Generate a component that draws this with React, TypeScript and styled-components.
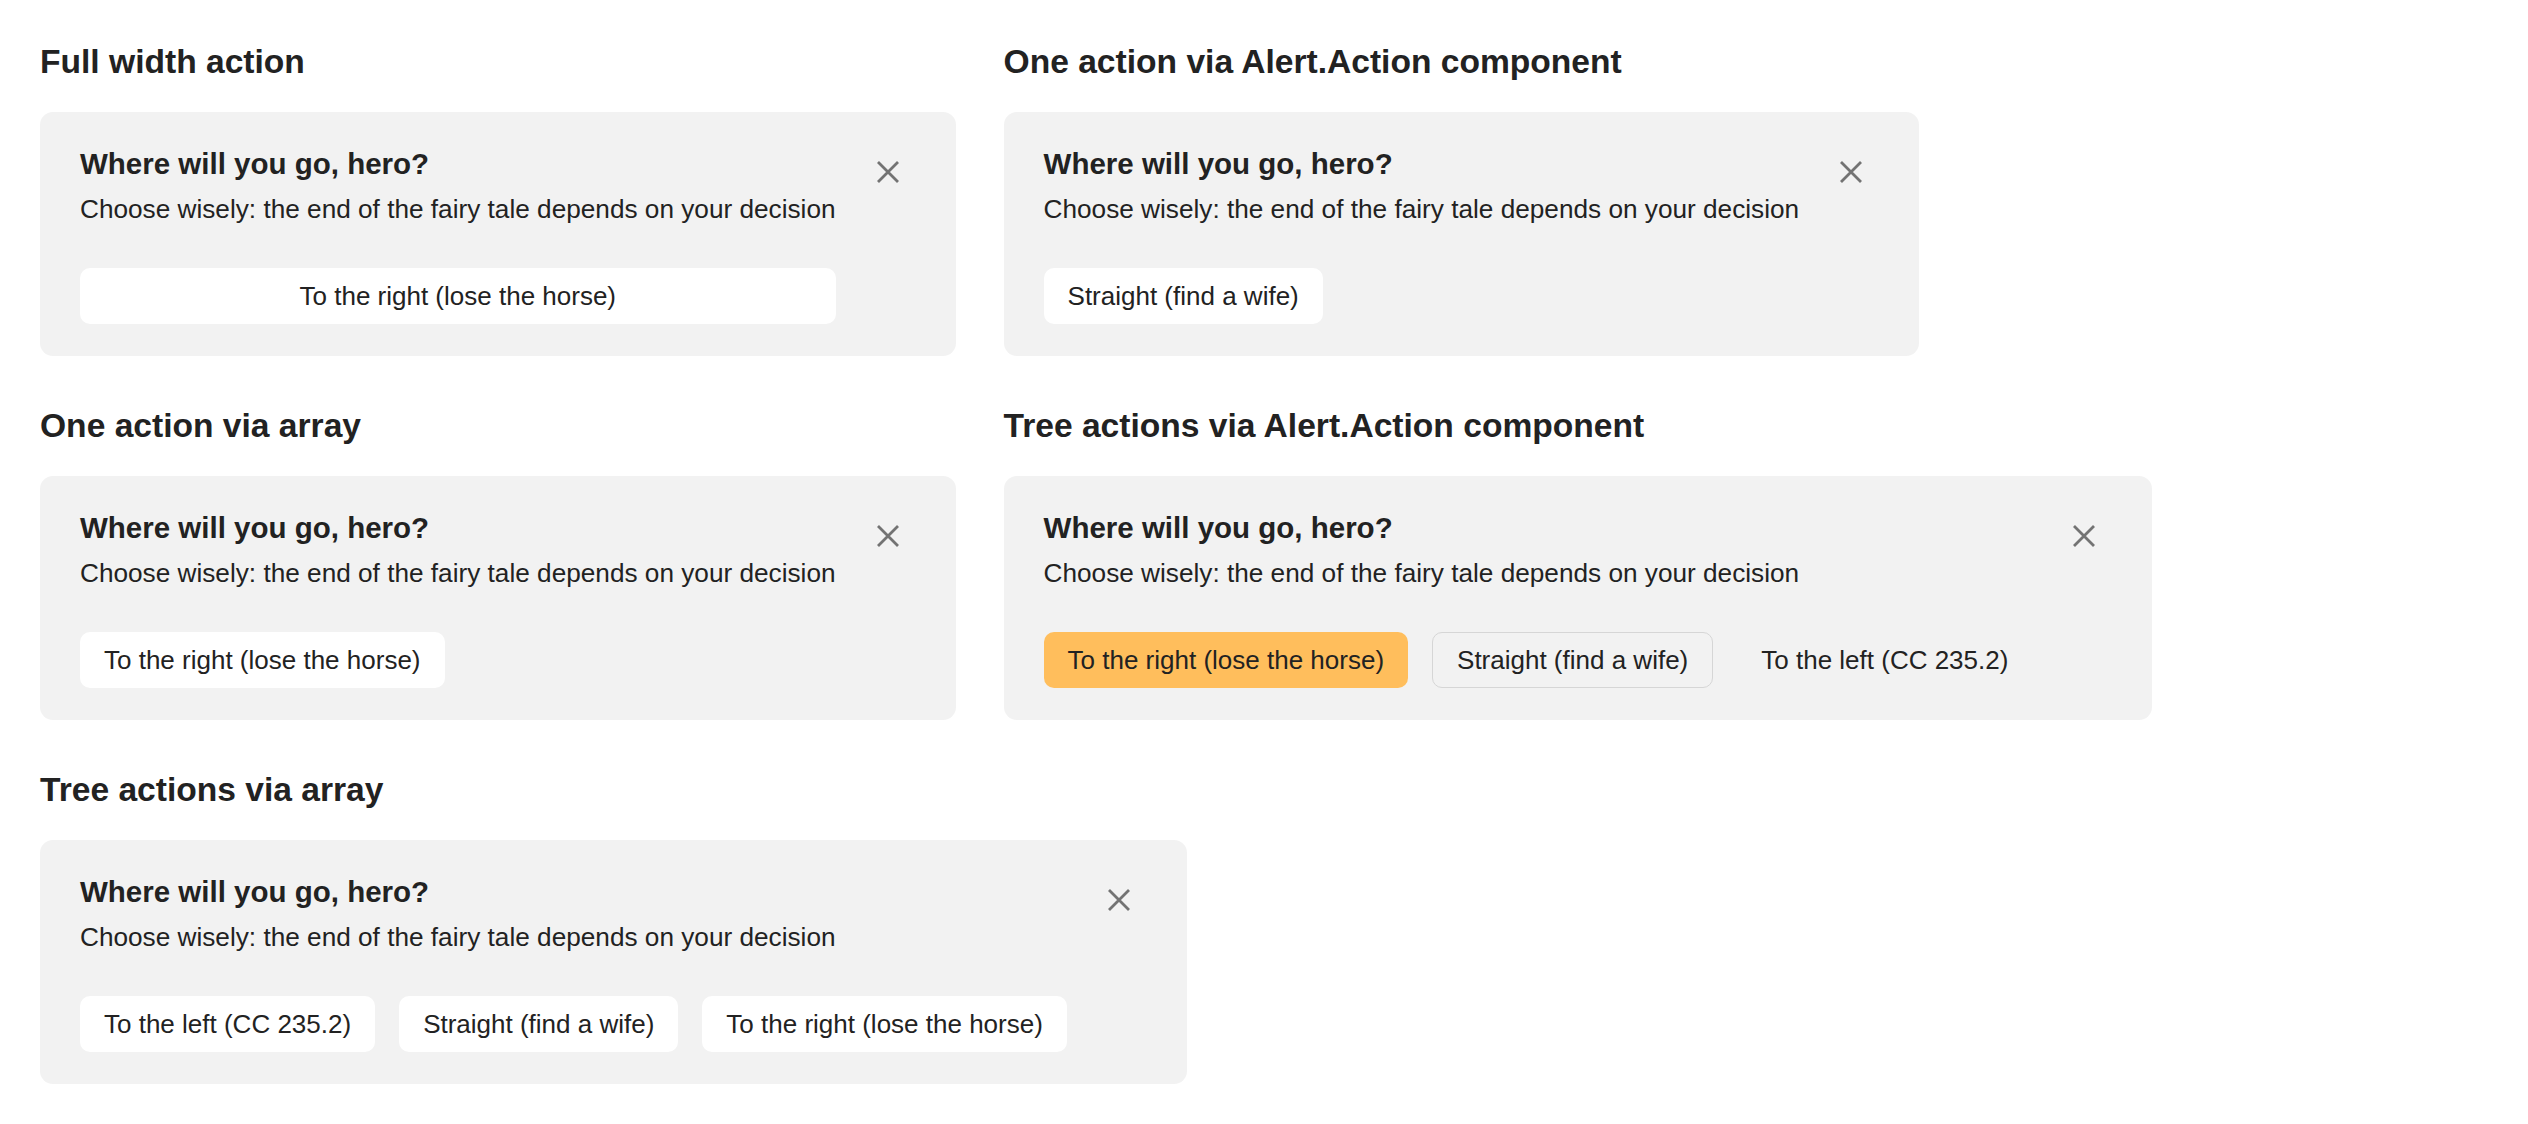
import styled, { createGlobalStyle, css } from 'styled-components';

const GlobalStyle = createGlobalStyle`
	html,
	body {
		margin: 0;
		background: #ffffff;
		font-family: 'Liberation Sans', Arial, sans-serif;
		color: #222222;
	}
`;

const Page = styled.div`
	display: flex;
	flex-wrap: wrap;
	align-items: flex-start;
	gap: 48px;
	padding: 40px;
`;

const Section = styled.section`
	display: flex;
	flex-direction: column;
`;

const Heading = styled.h3`
	margin: 0 0 28px;
	font-size: 33.6px;
	line-height: 44px;
	font-weight: 700;
	color: #222222;
`;

const Alert = styled.div`
	display: flex;
	align-items: flex-start;
	background: #f2f2f2;
	border-radius: 13px;
	padding: 32px 48px 32px 40px;
`;

const Content = styled.div`
	display: flex;
	flex-direction: column;
`;

const Title = styled.div`
	font-size: 29.5px;
	line-height: 40px;
	font-weight: 700;
	color: #222222;
`;

const Text = styled.div`
	margin-top: 4px;
	font-size: 26.2px;
	line-height: 42px;
	color: #222222;
	white-space: nowrap;
`;

const Actions = styled.div`
	display: flex;
	gap: 24px;
	margin-top: 38px;
`;

type Variant = 'default' | 'primary' | 'outline' | 'ghost';

const Button = styled.button<{ $variant?: Variant; $full?: boolean }>`
	box-sizing: border-box;
	height: 56px;
	padding: 0 24px;
	border-radius: 10px;
	border: none;
	background: #ffffff;
	font-family: 'Liberation Sans', Arial, sans-serif;
	font-size: 26px;
	color: #222222;
	white-space: nowrap;
	cursor: pointer;
	${(p) => p.$full && 'flex: 1;'}
	${(p) =>
		p.$variant === 'primary' &&
		css`
			background: #ffbe5c;
		`}
	${(p) =>
		p.$variant === 'outline' &&
		css`
			background: transparent;
			border: 1.5px solid #d6d6d6;
		`}
	${(p) =>
		p.$variant === 'ghost' &&
		css`
			background: transparent;
		`}
`;

const Close = styled.button`
	display: flex;
	align-items: center;
	justify-content: center;
	flex-shrink: 0;
	width: 40px;
	height: 40px;
	margin: 8px 0 0 32px;
	padding: 0;
	border: none;
	background: transparent;
	cursor: pointer;
`;

const CloseIcon = () => (
	<svg width="22" height="22" viewBox="0 0 22 22" fill="none">
		<path d="M1 1L21 21M21 1L1 21" stroke="#737373" strokeWidth="2.8" />
	</svg>
);

type Action = { label: string; variant?: Variant };

const HeroAlert = ({ actions, full }: { actions: Action[]; full?: boolean }) => (
	<Alert>
		<Content>
			<Title>Where will you go, hero?</Title>
			<Text>Choose wisely: the end of the fairy tale depends on your decision</Text>
			<Actions>
				{actions.map((a) => (
					<Button key={a.label} $variant={a.variant} $full={full}>
						{a.label}
					</Button>
				))}
			</Actions>
		</Content>
		<Close aria-label="Close">
			<CloseIcon />
		</Close>
	</Alert>
);

const sections: { title: string; actions: Action[]; full?: boolean }[] = [
	{ title: 'Full width action', actions: [{ label: 'To the right (lose the horse)' }], full: true },
	{ title: 'One action via Alert.Action component', actions: [{ label: 'Straight (find a wife)' }] },
	{ title: 'One action via array', actions: [{ label: 'To the right (lose the horse)' }] },
	{
		title: 'Tree actions via Alert.Action component',
		actions: [
			{ label: 'To the right (lose the horse)', variant: 'primary' },
			{ label: 'Straight (find a wife)', variant: 'outline' },
			{ label: 'To the left (CC 235.2)', variant: 'ghost' },
		],
	},
	{
		title: 'Tree actions via array',
		actions: [
			{ label: 'To the left (CC 235.2)' },
			{ label: 'Straight (find a wife)' },
			{ label: 'To the right (lose the horse)' },
		],
	},
];

const App = () => {
	return (
		<>
			<GlobalStyle />
			<Page>
				{sections.map((s) => (
					<Section key={s.title}>
						<Heading>{s.title}</Heading>
						<HeroAlert actions={s.actions} full={s.full} />
					</Section>
				))}
			</Page>
		</>
	);
};

export default App;
